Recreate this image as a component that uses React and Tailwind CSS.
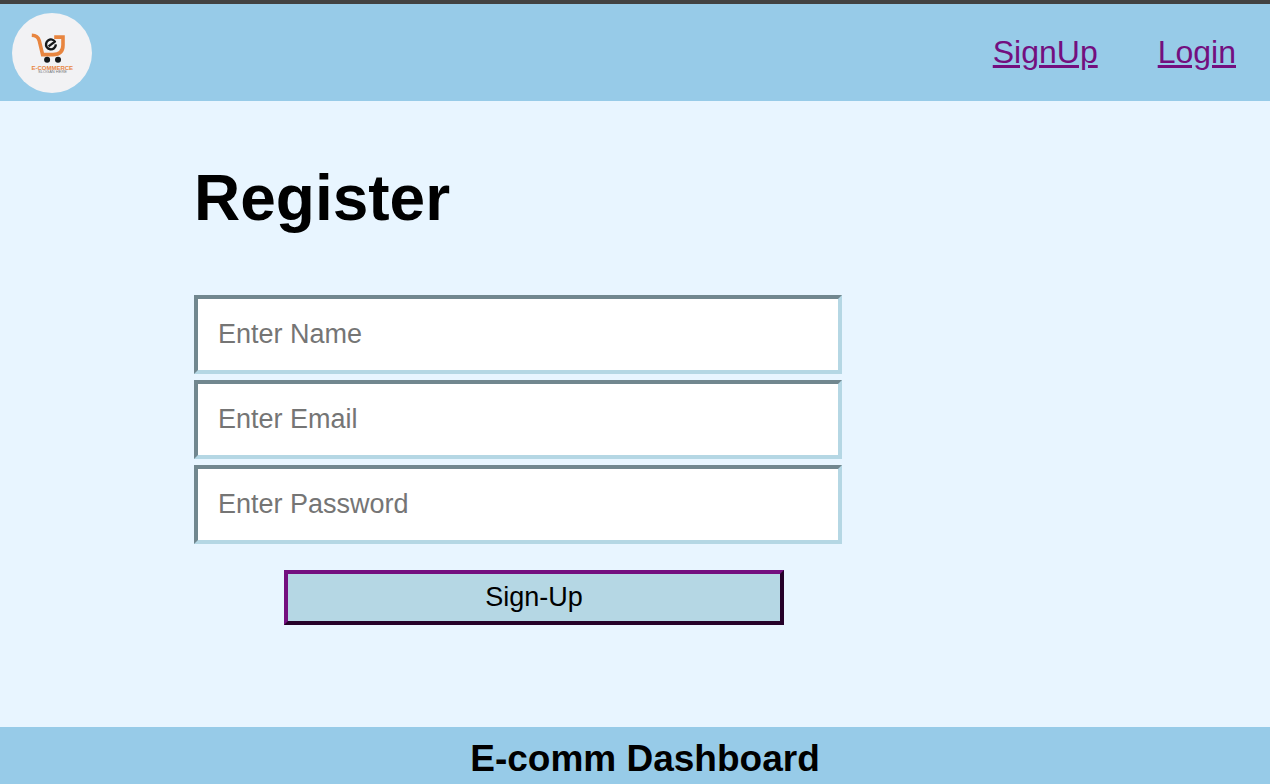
const fields = [
  { id: "name", type: "text", label: "Enter Name" },
  { id: "email", type: "email", label: "Enter Email" },
  { id: "password", type: "password", label: "Enter Password" },
];

function Logo() {
  return (
    <svg
      viewBox="0 0 80 80"
      className="size-20 shrink-0 rounded-full bg-[#f2f2f4]"
      role="img"
      aria-label="E-Commerce"
    >
      <path
        d="M19.8 22.2 C24 22.4 26.2 24 27.2 27.4 L30.6 41.6 H41 C48 41.6 51 38 51 32 V24.1 H42.2"
        fill="none"
        stroke="#e8853f"
        strokeWidth="3.6"
      />
      <path
        d="M36.6 33.4 L42.9 28.6 C41.4 26.4 38.6 25.8 36.4 27.2 C33.9 28.8 33.3 32 34.9 34.3 C36.6 36.6 39.8 37 42 35.2 C43.2 34.2 43.8 33 43.9 31.4"
        fill="none"
        stroke="#15181a"
        strokeWidth="2.4"
        strokeLinejoin="round"
      />
      <circle cx="35.1" cy="46.8" r="3" fill="#15181a" />
      <circle cx="46" cy="46.8" r="3" fill="#15181a" />
      <text
        x="40.3"
        y="57"
        textAnchor="middle"
        className="fill-[#e8853f] font-['Liberation_Sans',Arial,sans-serif] text-[6px] font-bold"
      >
        E-COMMERCE
      </text>
      <text
        x="40.5"
        y="60"
        textAnchor="middle"
        className="fill-[#77777a] font-['Liberation_Sans',Arial,sans-serif] text-[4px]"
      >
        SLOGAN HERE
      </text>
    </svg>
  );
}

export default function App() {
  return (
    <div className="flex min-h-screen flex-col bg-[#e8f5ff] font-['Liberation_Sans',Arial,sans-serif] text-black">
      <header className="flex items-center justify-between border-t-4 border-[#424242] bg-[#97cbe8] pt-[9px] pr-[34px] pb-2 pl-3">
        <a href="#home">
          <Logo />
        </a>
        <nav className="flex gap-[60px] pb-0.5 text-[32px] leading-9 text-[#730f7f]">
          <a href="#signup" className="underline decoration-[3px]">
            SignUp
          </a>
          <a href="#login" className="underline decoration-[3px]">
            Login
          </a>
        </nav>
      </header>

      <main className="grow px-[194px] pt-[61px] pb-10">
        <h1 className="text-[64px] leading-[72px] font-bold">Register</h1>
        <form
          className="mt-[61px] flex max-w-[648px] flex-col gap-1.5"
          onSubmit={(event) => event.preventDefault()}
        >
          {fields.map((field) => (
            <input
              key={field.id}
              id={field.id}
              type={field.type}
              aria-label={field.label}
              placeholder={field.label}
              className="block h-[79px] w-full border-4 border-t-[#71878f] border-r-[#b5d7e4] border-b-[#b5d7e4] border-l-[#71878f] bg-white px-5 text-[27px] placeholder:text-[#757575]"
            />
          ))}
          <button
            type="submit"
            className="mt-5 mr-[58px] ml-[90px] h-[55px] border-4 border-t-[#730f7f] border-r-[#250129] border-b-[#250129] border-l-[#730f7f] bg-[#b5d7e4] pb-0.5 text-[27px] leading-8"
          >
            Sign-Up
          </button>
        </form>
      </main>

      <footer className="bg-[#97cbe8] pt-3 pb-[5px] pl-5 text-center">
        <h3 className="text-[37px] leading-10 font-bold">E-comm Dashboard</h3>
      </footer>
    </div>
  );
}
